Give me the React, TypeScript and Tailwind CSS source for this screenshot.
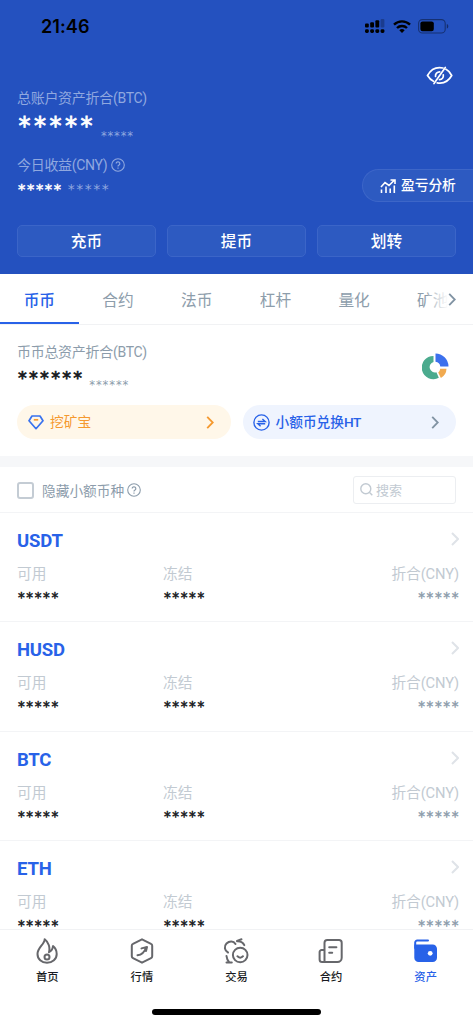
import type { ReactNode } from 'react'

const coins = ['USDT', 'HUSD', 'BTC', 'ETH']
const actions = ['充币', '提币', '划转']
const tabs = ['币币', '合约', '法币', '杠杆', '量化', '矿池']

function Stars({ count = 5, className }: { count?: number; className: string }) {
  return (
    <span className={`block whitespace-nowrap font-['DejaVu_Sans',sans-serif] ${className}`}>{'*'.repeat(count)}</span>
  )
}

function Chevron({ className }: { className: string }) {
  return (
    <svg viewBox="0 0 8 14" fill="none" stroke="currentColor" className={className} aria-hidden="true">
      <path d="M1 1l6 6-6 6" strokeWidth="2" />
    </svg>
  )
}

function Help() {
  return (
    <svg width="14" height="14" viewBox="0 0 14 14" fill="none" stroke="currentColor" strokeWidth="1.1" aria-hidden="true">
      <circle cx="7" cy="7" r="6.3" />
      <path d="M5.2 5.600a1.800 1.800 0 1 1 2.800 1.500c-.7.4-1 .7-1 1.300M7 9.500v1.200" strokeWidth="1.200" />
    </svg>
  )
}

function StatusBar() {
  return (
    <div className="flex h-[52px] items-center justify-between pl-[41px] pr-[24px] text-black">
      <span className="font-['Inter',sans-serif] text-[18px] font-semibold tracking-[0.1px]">21:46</span>
      <div className="flex items-center">
        <svg width="20" height="15" viewBox="0 0 20 15" fill="currentColor" aria-hidden="true">
          <rect x="0" y="4.400" width="3.800" height="4" rx="1" />
          <rect x="5.200" y="3.200" width="3.800" height="5.200" rx="1" />
          <rect x="10.400" y="1.200" width="3.800" height="7.200" rx="1" />
          <rect x="15.600" y="0" width="3.800" height="8.400" rx="1" opacity=".25" />
          <rect x="0" y="10.200" width="3.800" height="3.800" rx="1.400" />
          <rect x="5.200" y="10.200" width="3.800" height="3.800" rx="1.400" />
          <rect x="10.400" y="10.200" width="3.800" height="3.800" rx="1.400" />
          <rect x="15.600" y="10.200" width="3.800" height="3.800" rx="1.400" />
        </svg>
        <svg width="18" height="13" viewBox="0 0 18 13" className="ml-2" fill="none" stroke="currentColor" strokeWidth="2.400" aria-hidden="true">
          <path d="M1 4.600a11.600 11.600 0 0 1 16 0M4 8a7.200 7.200 0 0 1 10 0" />
          <path d="M9 13l-2.700-2.800a4 4 0 0 1 5.400 0z" fill="currentColor" stroke="none" />
        </svg>
        <svg width="31" height="15" viewBox="0 0 31 15" className="ml-[7px]" aria-hidden="true">
          <rect x=".6" y=".6" width="26.600" height="13.400" rx="3.800" fill="none" stroke="currentColor" strokeWidth="1.100" opacity=".4" />
          <rect x="2.400" y="2.400" width="13.400" height="9.800" rx="2.200" fill="currentColor" />
          <path d="M28.800 5v4.600c1-.4 1.500-1.200 1.500-2.300s-.5-1.900-1.500-2.300z" fill="currentColor" opacity=".45" />
        </svg>
      </div>
    </div>
  )
}

function Header() {
  return (
    <header className="h-[274px] bg-[#2451bf]">
      <StatusBar />
      <div className="flex h-[173px] justify-between">
        <div className="pl-[17px] pt-[36px] text-[#90a8df]">
          <p className="h-[20px] text-[14px] leading-[20px] tracking-[-0.3px]">总账户资产折合(BTC)</p>
          <div className="flex">
            <Stars className="ml-[1.500px] h-[38px] text-[24px] leading-[36px] tracking-[3.500px] text-white [-webkit-text-stroke:0.8px]" />
            <Stars className="ml-[5px] mt-[18px] h-[20px] text-[11.500px] leading-[20px] tracking-[0.800px]" />
          </div>
          <p className="mt-[9px] flex h-[20px] items-center gap-[4px] text-[14px] leading-[20px] tracking-[-0.3px]">
            今日收益(CNY)
            <Help />
          </p>
          <div className="mt-[2px] flex">
            <Stars className="ml-px h-[24px] text-[14.500px] leading-[24px] tracking-[1.700px] text-white [-webkit-text-stroke:0.5px]" />
            <Stars className="ml-[5px] h-[24px] text-[14px] leading-[24px] tracking-[1.500px]" />
          </div>
        </div>
        <div className="flex w-[111px] flex-col pt-[14px] text-white">
          <svg width="27" height="19" viewBox="0 0 27 19" className="ml-[64px]" fill="none" stroke="currentColor" strokeWidth="1.700" strokeLinecap="round" aria-hidden="true">
            <path d="M17 2C10 .6 4.500 4 1.500 9.500c1.500 2.500 3.500 4.500 6 5.700M20 3.300c2.500 1.200 4.300 3.500 5.700 6.200-3 5.500-8.500 8.300-14.500 7.300" />
            <path d="M19.300 1.500L8 17.500M9.500 10.500c-.3-2.800 1.700-4.700 4.200-4.700M17.300 8.800c.4 2.800-1.200 4.600-3.800 4.800" />
          </svg>
          <div className="mt-[84px] flex h-[33px] items-center gap-[5px] rounded-l-full border border-r-0 border-[#3d66c8] bg-[#2d5ac1] pl-[17px]">
            <svg width="16" height="14" viewBox="0 0 16 14" fill="none" stroke="currentColor" strokeWidth="1.600" aria-hidden="true">
              <path d="M1 8l4-4.500 4 3L14 1.500M10.500 1H15v4M1.500 10.500V14M6 7.500V14M10.200 9.500V14M14.300 6.500V14" />
            </svg>
            <span className="text-[13.700px] font-medium">盈亏分析</span>
          </div>
        </div>
      </div>
      <div className="grid grid-cols-3 gap-[11px] px-[17px] text-white">
        {actions.map((label) => (
          <button key={label} className="h-[32px] rounded-[5px] border border-[#3b65c8] bg-[#2d5ac1] pt-[2px] text-[15.700px] font-medium">
            {label}
          </button>
        ))}
      </div>
    </header>
  )
}

function Tabs() {
  return (
    <div className="relative flex h-[51px] overflow-hidden border-b border-[#f1f2f4] text-[#8d9dab]">
      {tabs.map((label, i) => (
        <div
          key={label}
          className={
            i === 0
              ? 'flex h-[50px] w-[78.700px] shrink-0 items-center justify-center border-b-2 border-[#2862e8] pt-[5px] text-[15.700px] font-medium text-[#2862e8]'
              : 'flex h-[50px] w-[78.700px] shrink-0 items-center justify-center pt-[3px] text-[15.700px]'
          }
        >
          {label}
        </div>
      ))}
      <div className="absolute right-0 top-0 flex h-[49px] w-[45px] items-center justify-end bg-linear-to-r from-white/20 via-white via-45% to-white pr-[17px] pt-[2px]">
        <Chevron className="h-[13px] w-[8px] text-[#8193a3]" />
      </div>
    </div>
  )
}

function Summary() {
  return (
    <section className="h-[131px] px-[17px] pt-[17px]">
      <div className="flex h-[63px] justify-between text-[#8c9cab]">
        <div>
          <p className="h-[20px] text-[14px] leading-[20px] tracking-[-0.3px]">币币总资产折合(BTC)</p>
          <div className="mt-[2px] flex">
            <Stars count={6} className="ml-px h-[28px] text-[17.500px] leading-[28px] tracking-[2.300px] text-[#191b22] [-webkit-text-stroke:0.7px]" />
            <Stars count={6} className="ml-[5px] mt-[11px] h-[20px] text-[11.500px] leading-[20px] tracking-[0.900px]" />
          </div>
        </div>
        <svg width="27" height="28" viewBox="0 0 27 28" className="mr-[7px] mt-[11px]" aria-hidden="true">
          <path d="M11.500 3v6A5.300 5.300 0 1 0 14.400 19.200l2.400 5.600A11.600 11.600 0 1 1 11.500 3z" fill="#4bab8e" />
          <path d="M13.500.5a13.200 13.200 0 0 1 13 13H18.300a5.500 5.500 0 0 0-4.800-4.700z" fill="#3c70ed" />
          <path d="M18.200 15.800h6.300a11 11 0 0 1-5.600 9.200l-2.700-5.600a5 5 0 0 0 2-3.600z" fill="#f1aa50" />
        </svg>
      </div>
      <div className="grid grid-cols-2 gap-[12px]">
        <div className="flex h-[34px] items-center rounded-full bg-[#fff7e9] pl-[11px] pr-[17px] text-[13.700px] text-[#f5992f]">
          <svg width="16" height="15" viewBox="0 0 16 15" fill="none" strokeWidth="1.700" strokeLinejoin="round" aria-hidden="true">
            <path d="M4 1h8l3 4.700-7 8-7-8z" stroke="#3972ee" />
            <path d="M5.800 4.800h4.400" stroke="#f5992f" />
          </svg>
          <span className="ml-[6px] flex-1 pt-px">挖矿宝</span>
          <Chevron className="h-[13px] w-[8px]" />
        </div>
        <div className="flex h-[34px] items-center rounded-full bg-[#eff4fe] pl-[10px] pr-[17px] text-[13.700px] font-medium text-[#2862e8]">
          <svg width="17" height="17" viewBox="0 0 17 17" fill="none" stroke="currentColor" strokeWidth="1.400" aria-hidden="true">
            <circle cx="8.500" cy="8.500" r="7.600" />
            <path d="M4.800 7.500h7.400L9.400 4.900M12.200 9.700H4.800l2.800 2.600" />
          </svg>
          <span className="ml-[6px] flex-1 pt-px">
            小额币兑换<span className="tracking-[-0.500px]">HT</span>
          </span>
          <Chevron className="h-[13px] w-[8px] text-[#8193a3]" />
        </div>
      </div>
    </section>
  )
}

function Filter() {
  return (
    <div className="flex h-[46px] items-center justify-between border-b border-[#f3f4f6] px-[17px] text-[13.700px]">
      <div className="flex items-center pt-[2px] text-[#8c9cab]">
        <span className="h-[17px] w-[17px] rounded-[3px] border-2 border-[#c4ccd4]" />
        <span className="ml-[8px] mr-[3px] pt-px">隐藏小额币种</span>
        <Help />
      </div>
      <div className="flex h-[28px] w-[103px] items-center rounded-[3px] border border-[#eceef1] pl-[6px] text-[13px] text-[#c2cad2]">
        <svg width="13" height="13" viewBox="0 0 13 13" fill="none" stroke="currentColor" strokeWidth="1.400" aria-hidden="true">
          <circle cx="5.800" cy="5.800" r="5" />
          <path d="M9.300 9.300l3 3" />
        </svg>
        <span className="ml-[3px] pt-[2px]">搜索</span>
      </div>
    </div>
  )
}

function CoinRow({ name }: { name: string }) {
  return (
    <div className="h-[109.300px] border-b border-[#f3f4f6] pl-[17px] pr-[14px] pt-[14px]">
      <div className="flex h-[28px] items-start justify-between">
        <h2 className="font-['Roboto',sans-serif] text-[18.500px] font-bold leading-[28px] tracking-[-0.200px] text-[#2862e8]">{name}</h2>
        <Chevron className="mt-[5px] h-[14px] w-[8px] text-[#dfe3e8]" />
      </div>
      <div className="mt-[8px] grid grid-cols-[146px_1fr_auto] text-[14.700px] leading-[22px] text-[#c2cad2]">
        <span>可用</span>
        <span>冻结</span>
        <span className="tracking-[-0.100px]">折合(CNY)</span>
      </div>
      <div className="grid grid-cols-[146px_1fr_auto] pl-px text-[#191b22]">
        <Stars className="h-[24px] text-[13.500px] leading-[24px] tracking-[1.600px] [-webkit-text-stroke:0.5px]" />
        <Stars className="h-[24px] text-[13.500px] leading-[24px] tracking-[1.600px] [-webkit-text-stroke:0.5px]" />
        <Stars className="-mr-px h-[24px] text-[13.500px] leading-[24px] tracking-[1.600px] text-[#8c9cab] [-webkit-text-stroke:0.4px]" />
      </div>
    </div>
  )
}

function NavItem({ label, active, children }: { label: string; active?: boolean; children: ReactNode }) {
  return (
    <div className={active ? 'flex w-[94.600px] flex-col items-center text-[#2862e8]' : 'flex w-[94.600px] flex-col items-center text-[#191b22]'}>
      <svg
        width="26"
        height="26"
        viewBox="0 0 26 26"
        fill="none"
        strokeWidth="2"
        strokeLinecap="round"
        strokeLinejoin="round"
        className={active ? 'stroke-[#2862e8]' : 'stroke-[#66676b]'}
        aria-hidden="true"
      >
        {children}
      </svg>
      <span className="mt-[5px] text-[11.300px] font-medium leading-[18px]">{label}</span>
    </div>
  )
}

function BottomNav() {
  return (
    <nav className="relative z-10 h-[95px] border-t border-[#f1f2f4] bg-white pt-[8px]">
      <div className="flex">
        <NavItem label="首页">
          <path d="M10.700 1.200C10.500 6.500 3.500 9.500 3.500 16c0 5.200 4 8.800 9.500 8.800s9.700-3.600 9.700-8.800c0-3.500-1.200-6-3.700-8-.2 2.800-1.400 4.800-4 6.200C16.300 9.500 14.500 4 10.700 1.200z" />
          <circle cx="13" cy="18.900" r="2.500" />
        </NavItem>
        <NavItem label="行情">
          <path d="M13 1.300l9 4.600a2 2 0 0 1 1.200 1.800v10.600a2 2 0 0 1-1.200 1.800l-9 4.600-9-4.600a2 2 0 0 1-1.200-1.800V7.700A2 2 0 0 1 4 5.900z" />
          <path d="M8.500 17.200c4.500-.5 7-3 8.500-7.500M12.500 10.400l5.500-1.400-1 4" />
        </NavItem>
        <NavItem label="交易">
          <circle cx="17.200" cy="17" r="7.300" />
          <path d="M14.400 18.200c1.400 1.900 4.200 1.900 5.600 0M5 14.500A5.600 5.600 0 0 1 3.500 5.500C6.500 2.500 10.500 2.700 12.500 6M3.500 18c.2 2.500 1 4.300 2.800 6.300M3.500 24.500h5.300M14 3.200c3.400-.2 6 1.100 7.300 3.900M14 3l4.500-1.700" />
        </NavItem>
        <NavItem label="合约">
          <path d="M6.500 24V4.800a2.800 2.800 0 0 1 2.800-2.800H21a2.700 2.700 0 0 1 2.700 2.700v15A4.300 4.300 0 0 1 19.400 24H4.100a2.500 2.500 0 0 1-2.500-2.500V14a2 2 0 0 1 2-2h2.900M11.200 9.300h7.200M11.200 14.700h3" />
        </NavItem>
        <NavItem label="资产" active>
          <path d="M15 2.500H4.200A2 2 0 0 0 2.200 4.500V10" />
          <path d="M1.300 6.400h18.400A4.300 4.300 0 0 1 24 10.700v9a4.300 4.300 0 0 1-4.300 4.300H5.600a4.300 4.300 0 0 1-4.300-4.300z" fill="#2862e8" stroke="none" />
          <circle cx="17.200" cy="15.300" r="2.400" fill="white" stroke="none" />
        </NavItem>
      </div>
      <div className="mx-auto mt-[22px] h-[6px] w-[169px] rounded-full bg-black" />
    </nav>
  )
}

export default function App() {
  return (
    <div className="flex h-[1024px] w-[473px] flex-col overflow-hidden bg-white font-['Roboto','Noto_Sans_CJK_SC',sans-serif]">
      <Header />
      <Tabs />
      <Summary />
      <div className="h-[11px] shrink-0 bg-[#f6f7f9]" />
      <Filter />
      <main className="min-h-0 flex-1 overflow-hidden">
        {coins.map((coin) => (
          <CoinRow key={coin} name={coin} />
        ))}
      </main>
      <BottomNav />
    </div>
  )
}
